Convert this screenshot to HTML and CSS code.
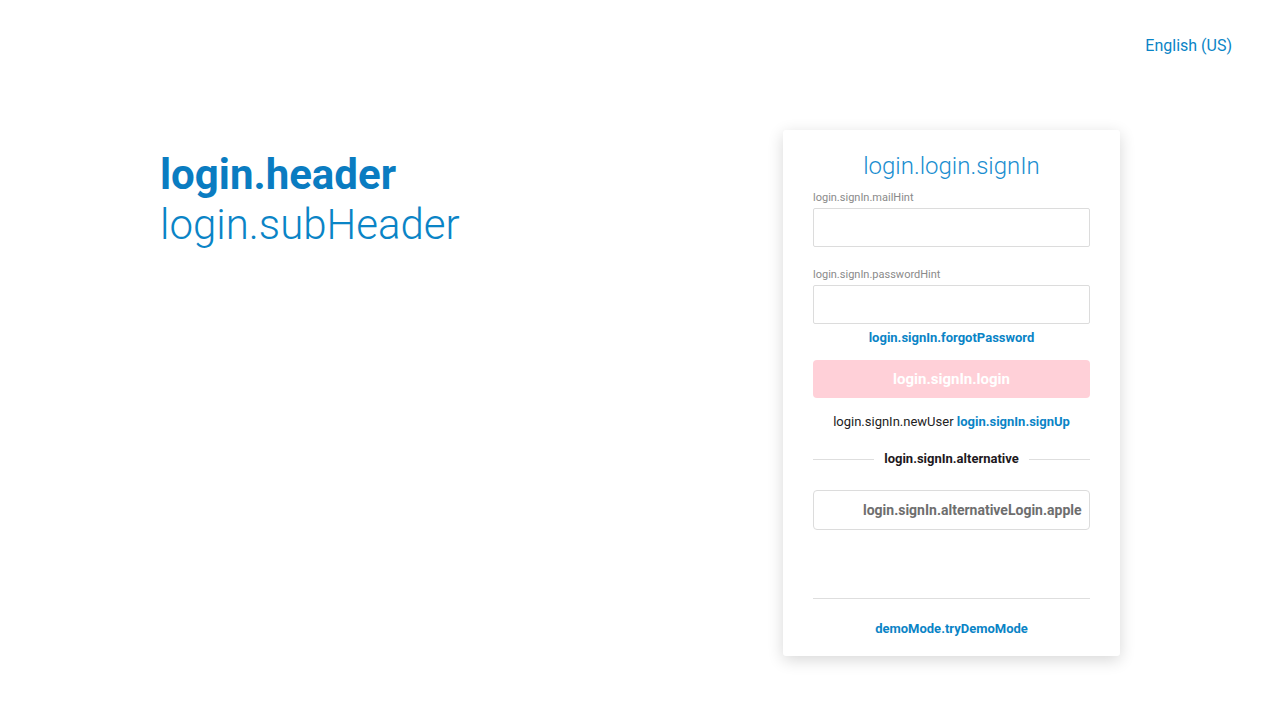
FILE: index.html
```html
<!DOCTYPE html>
<html lang="en">
<head>
<meta charset="utf-8">
<title>Login</title>
<link rel="stylesheet" href="styles.css">
</head>
<body>
<div class="page">
  <header class="topbar">
    <a class="lang" href="#">English (US)</a>
  </header>
  <main class="main">
    <section class="intro">
      <h1 class="intro-title">login.header</h1>
      <p class="intro-sub">login.subHeader</p>
    </section>
    <section class="card">
      <h2 class="card-title">login.login.signIn</h2>
      <label class="field">
        <span class="field-label">login.signIn.mailHint</span>
        <input class="field-input" type="text">
      </label>
      <label class="field field-second">
        <span class="field-label">login.signIn.passwordHint</span>
        <input class="field-input" type="password">
      </label>
      <a class="link forgot" href="#">login.signIn.forgotPassword</a>
      <button class="btn-primary" type="button" disabled>login.signIn.login</button>
      <p class="newuser">login.signIn.newUser <a class="link" href="#">login.signIn.signUp</a></p>
      <div class="divider"><span>login.signIn.alternative</span></div>
      <button class="btn-alt" type="button"><span class="btn-alt-text">login.signIn.alternativeLogin.apple</span></button>
      <div class="spacer"></div>
      <div class="card-footer">
        <a class="link demo" href="#">demoMode.tryDemoMode</a>
      </div>
    </section>
  </main>
</div>
</body>
</html>
```

FILE: styles.css
```css
* { box-sizing: border-box; }
html, body { margin: 0; padding: 0; }
body {
  font-family: Roboto, "Liberation Sans", Arial, sans-serif;
  background: #fff;
  color: #222;
  width: 1280px;
  height: 720px;
  overflow: hidden;
}
.page { display: flex; flex-direction: column; }
.topbar {
  display: flex;
  justify-content: flex-end;
  padding: 36px 48px 0 0;
  height: 56px;
}
.lang {
  color: #0a84c6;
  text-decoration: none;
  font-size: 16px;
  line-height: 20px;
}
.main {
  display: flex;
  padding: 74px 0 0 160px;
}
.intro { width: 623px; padding-top: 20px; }
.intro-title {
  margin: 0;
  font-size: 42px;
  font-weight: 700;
  line-height: 50px;
  color: #0a7cc1;
}
.intro-sub {
  margin: 0;
  font-size: 42px;
  font-weight: 300;
  line-height: 50px;
  color: #0a84c6;
}
.card {
  width: 337px;
  height: 526px;
  background: #fff;
  border-radius: 3px;
  box-shadow: 0 4px 16px rgba(0,0,0,0.16);
  padding: 20px 30px 0;
  display: flex;
  flex-direction: column;
}
.card-title {
  margin: 0;
  text-align: center;
  font-size: 24px;
  font-weight: 300;
  line-height: 32px;
  color: #1a8ed0;
}
.field { display: flex; flex-direction: column; margin-top: 9px; }
.field-second { margin-top: 21px; }
.field-label {
  font-size: 11px;
  line-height: 13px;
  color: #8a8a8a;
  margin-bottom: 4px;
}
.field-input {
  height: 39px;
  border: 1px solid #dcdcdc;
  border-radius: 2px;
  outline: none;
  font: inherit;
  padding: 0 10px;
}
.link {
  color: #0a84c6;
  font-weight: 700;
  text-decoration: none;
}
.forgot {
  margin-top: 6px;
  text-align: center;
  font-size: 13px;
  line-height: 15px;
}
.btn-primary {
  margin-top: 15px;
  height: 38px;
  border: none;
  border-radius: 4px;
  background: #ffd0d8;
  color: #fff;
  font-family: inherit;
  font-size: 15px;
  font-weight: 700;
}
.newuser {
  margin: 16px 0 0;
  text-align: center;
  font-size: 13px;
  line-height: 16px;
  color: #222;
}
.divider {
  margin-top: 21px;
  display: flex;
  align-items: center;
  gap: 10px;
  font-size: 13px;
  font-weight: 700;
  line-height: 16px;
  color: #1d1820;
}
.divider::before, .divider::after {
  content: "";
  flex: 1;
  height: 1px;
  background: #dedede;
}
.btn-alt {
  margin-top: 23px;
  height: 40px;
  border: 1px solid #dcdcdc;
  border-radius: 4px;
  background: #fff;
  display: flex;
  align-items: center;
  padding: 0 0 0 49px;
  overflow: hidden;
  font-family: inherit;
}
.btn-alt-text {
  font-size: 14px;
  font-weight: 700;
  color: #6e6e6e;
  white-space: nowrap;
}
.spacer { flex: 1; }
.card-footer {
  border-top: 1px solid #dedede;
  padding-top: 19px;
  text-align: center;
  height: 58px;
}
.demo { font-size: 13px; line-height: 16px; }
```
